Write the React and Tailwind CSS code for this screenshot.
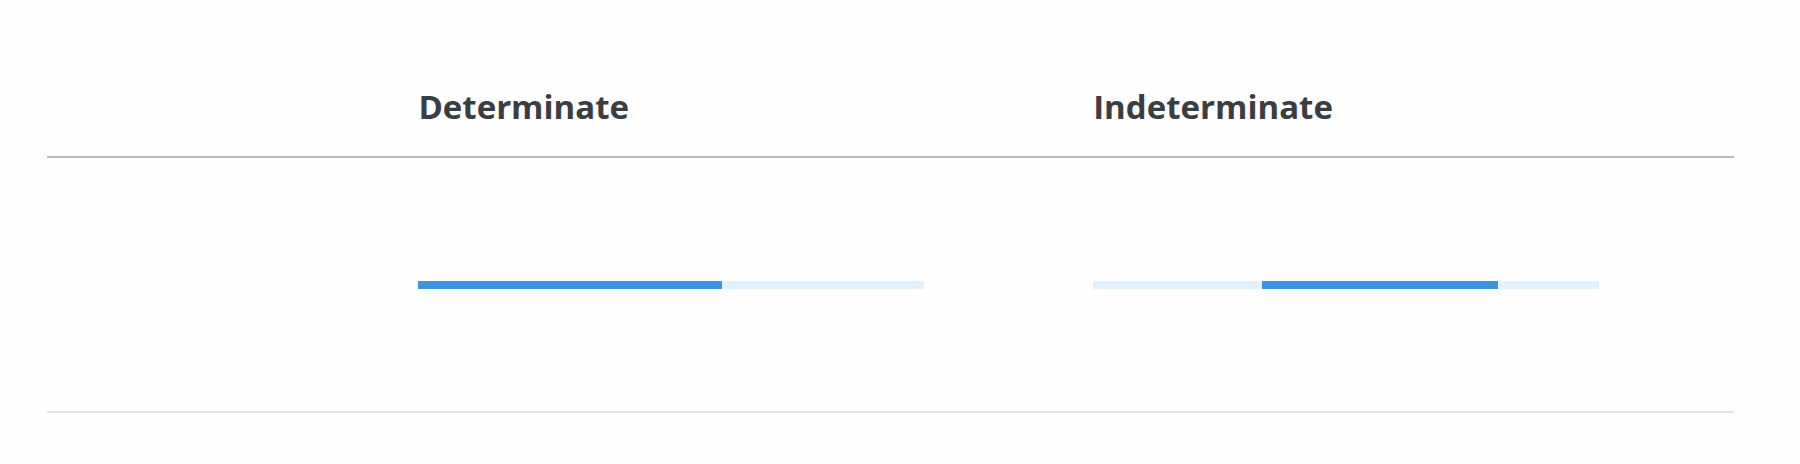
export default function App() {
  const font = { fontFamily: '"Open Sans", "Noto Sans", sans-serif' };
  return (
    <div className="w-[1800px] h-[464px] bg-[#fefefe] pl-[47px] pr-[66px]" style={font}>
      <div className="grid grid-cols-[1fr_2fr_2fr] h-[158px] items-end border-b-2 border-[#b5b8bc]">
        <div></div>
        <div className="pl-[34px] pb-[33px] text-[33px] leading-[33px] font-bold text-[#3a3d42]">Determinate</div>
        <div className="pl-[34px] pb-[33px] text-[33px] leading-[33px] font-bold text-[#3a3d42]">Indeterminate</div>
      </div>
      <div className="grid grid-cols-[1fr_2fr_2fr] h-[255px] items-center border-b-2 border-[#e2e2e8]">
        <div></div>
        <div className="pl-[34px]">
          <div className="w-[506px] h-[8px] bg-[#e3f1fd] flex">
            <div className="w-[304px] h-full bg-[#3d94de]"></div>
          </div>
        </div>
        <div className="pl-[34px]">
          <div className="w-[506px] h-[8px] bg-[#e3f1fd] flex">
            <div className="w-[169px] h-full"></div>
            <div className="w-[236px] h-full bg-[#3d94de]"></div>
          </div>
        </div>
      </div>
    </div>
  );
}
